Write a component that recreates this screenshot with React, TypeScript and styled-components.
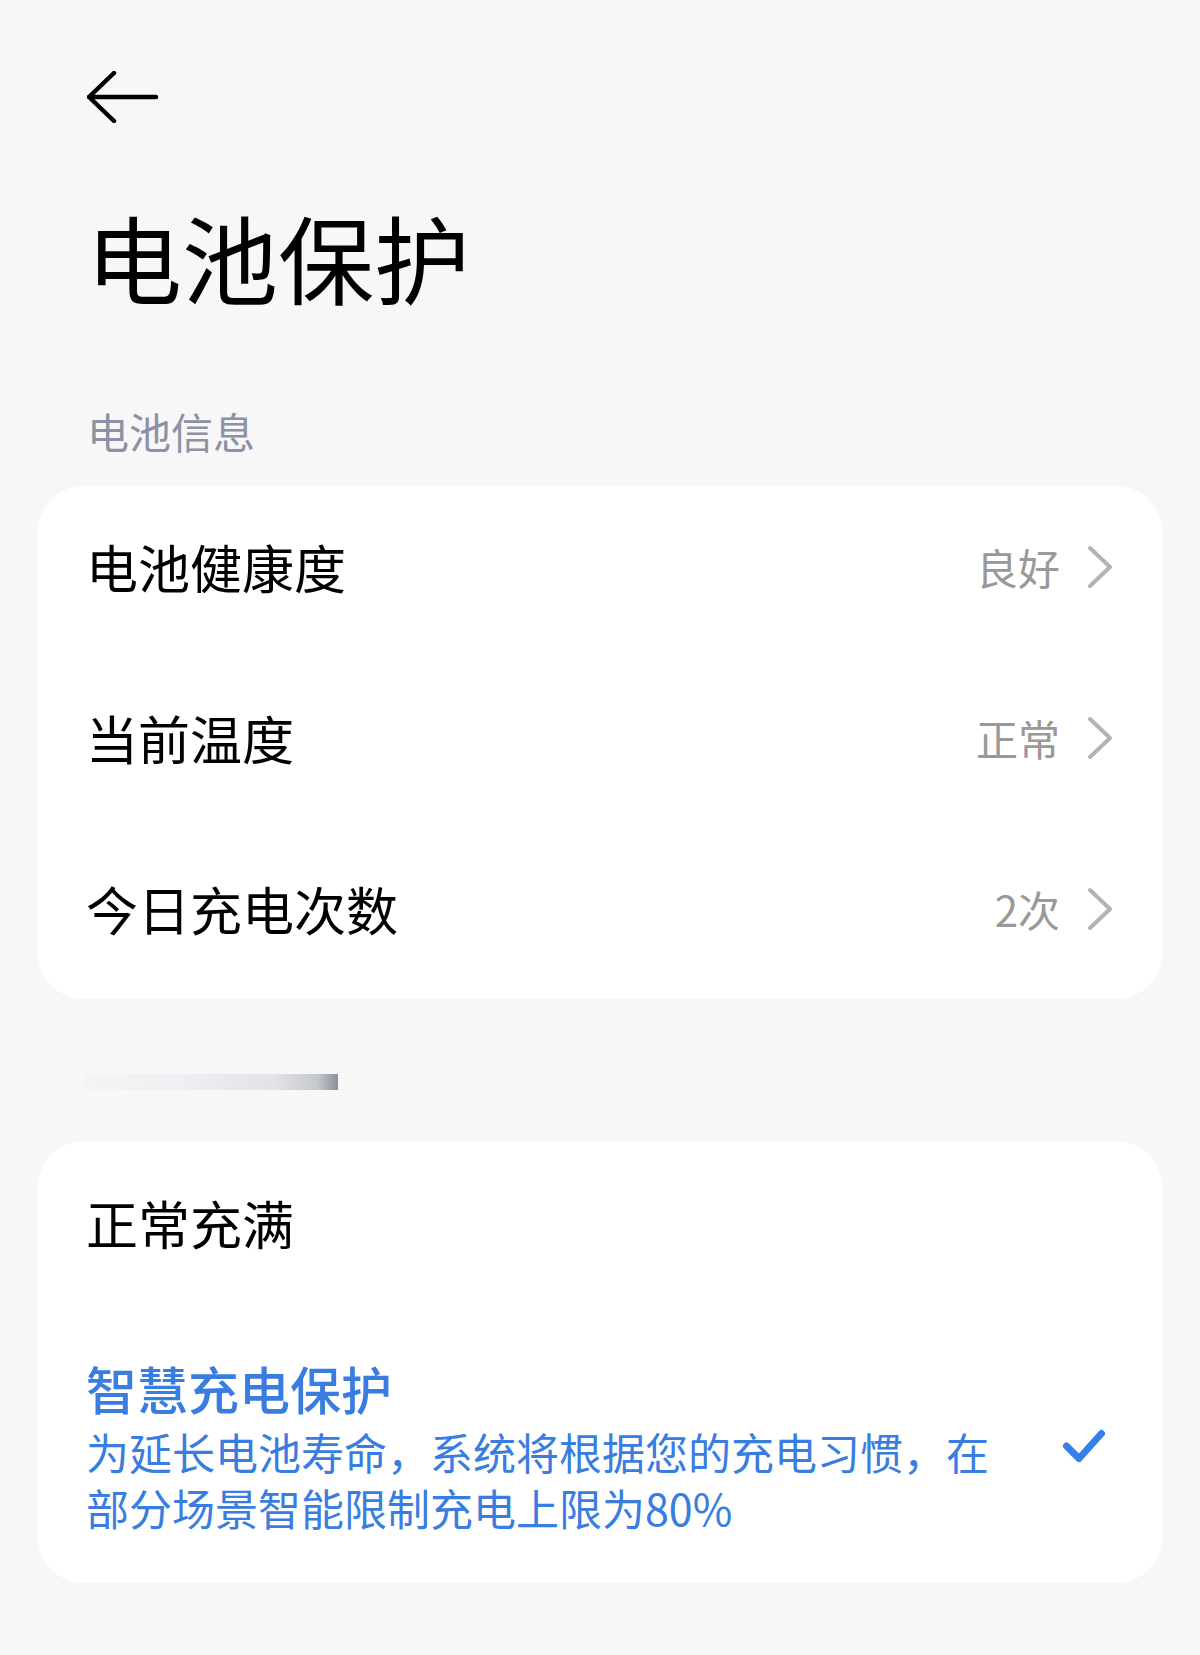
import React from "react";
import styled, { createGlobalStyle } from "styled-components";

const GlobalStyle = createGlobalStyle`
  html, body {
    margin: 0;
    padding: 0;
    background: #f7f7f7;
  }
  body {
    font-family: "Noto Sans CJK SC", "Noto Sans", sans-serif;
    -webkit-font-smoothing: antialiased;
  }
`;

const Page = styled.div`
  width: 1200px;
  min-height: 1655px;
  background: #f7f7f7;
  display: flex;
  flex-direction: column;
`;

const TopBar = styled.div`
  height: 194px;
  display: flex;
  align-items: center;
  padding: 0 87px;
`;

const BackButton = styled.button`
  border: none;
  background: none;
  padding: 0;
  width: 72px;
  height: 52px;
  display: flex;
  align-items: center;
  cursor: pointer;
`;

const Title = styled.h1`
  margin: 5px 0 0;
  padding: 0 86px;
  font-size: 96px;
  line-height: 113px;
  font-weight: 400;
  color: #000;
`;

const SectionLabel = styled.div`
  margin-top: 93px;
  padding: 0 87px;
  font-size: 42px;
  line-height: 52px;
  color: #8c91a6;
`;

const Card = styled.div<{ $top: number }>`
  margin: ${(p) => p.$top}px 38px 0;
  background: #fff;
  border-radius: 46px;
  display: flex;
  flex-direction: column;
  overflow: hidden;
`;

const Row = styled.div<{ $height?: number; $padRight?: number; $lift?: number }>`
  display: flex;
  align-items: center;
  box-sizing: border-box;
  ${(p) => (p.$height ? `height: ${p.$height}px;` : "")}
  padding: 0 ${(p) => p.$padRight ?? 48}px ${(p) => p.$lift ?? 0}px 48px;
  gap: 60px;
`;

const RowLabel = styled.div`
  flex: 1;
  font-size: 52px;
  line-height: 62px;
  color: #000;
`;

const RowValue = styled.div`
  display: flex;
  align-items: center;
  gap: 26px;
  font-size: 42px;
  line-height: 56px;
  color: #999;
`;

const BlurredHeader = styled.div`
  margin: 75px 0 0 85px;
  width: 253px;
  height: 16px;
  background: linear-gradient(
    to right,
    rgba(238, 239, 243, 0.3) 0%,
    #eeeff2 40%,
    #e2e3e8 75%,
    #c6c8d0 92%,
    #8a8e9e 100%
  );
  filter: blur(0.6px);
`;

const OptionBlock = styled.div`
  flex: 1;
  padding: 45px 0 48px;
  display: flex;
  flex-direction: column;
`;

const OptionTitle = styled.div`
  font-size: 51px;
  line-height: 60px;
  font-weight: 500;
  color: #3a7de0;
  margin-bottom: 5px;
`;

const OptionDesc = styled.div`
  font-size: 43px;
  line-height: 56px;
  color: #3a7de0;
`;

const CheckBox = styled.div`
  width: 50px;
  height: 42px;
  display: flex;
`;

const Chevron = () => (
  <svg width="28" height="44" viewBox="0 0 28 44">
    <path
      d="M4 3 L24 22 L4 41"
      fill="none"
      stroke="#b3b3b3"
      strokeWidth="4"
      strokeLinecap="round"
      strokeLinejoin="round"
    />
  </svg>
);

const BackArrow = () => (
  <svg width="72" height="52" viewBox="0 0 72 52">
    <path
      d="M27 2 L2 26 L27 50 M2 26 L69 26"
      fill="none"
      stroke="#000"
      strokeWidth="4.5"
      strokeLinecap="round"
      strokeLinejoin="round"
    />
  </svg>
);

const Check = () => (
  <svg width="50" height="42" viewBox="0 0 50 42">
    <path
      d="M7.5 19 L20 31.5 L42.5 6.5"
      fill="none"
      stroke="#3680ea"
      strokeWidth="7"
      strokeLinecap="round"
      strokeLinejoin="round"
    />
  </svg>
);

const infoRows = [
  { label: "电池健康度", value: "良好" },
  { label: "当前温度", value: "正常" },
  { label: "今日充电次数", value: "2次" },
];

export default function App() {
  return (
    <>
      <GlobalStyle />
      <Page>
        <TopBar>
          <BackButton aria-label="返回">
            <BackArrow />
          </BackButton>
        </TopBar>
        <Title>电池保护</Title>
        <SectionLabel>电池信息</SectionLabel>
        <Card $top={29}>
          {infoRows.map((r) => (
            <Row key={r.label} $height={171} $lift={10}>
              <RowLabel>{r.label}</RowLabel>
              <RowValue>
                <span>{r.value}</span>
                <Chevron />
              </RowValue>
            </Row>
          ))}
        </Card>
        <BlurredHeader />
        <Card $top={51}>
          <Row $height={172} $lift={8}>
            <RowLabel>正常充满</RowLabel>
          </Row>
          <Row $padRight={53}>
            <OptionBlock>
              <OptionTitle>智慧充电保护</OptionTitle>
              <OptionDesc>
                为延长电池寿命，系统将根据您的充电习惯，在部分场景智能限制充电上限为80%
              </OptionDesc>
            </OptionBlock>
            <CheckBox>
              <Check />
            </CheckBox>
          </Row>
        </Card>
      </Page>
    </>
  );
}
